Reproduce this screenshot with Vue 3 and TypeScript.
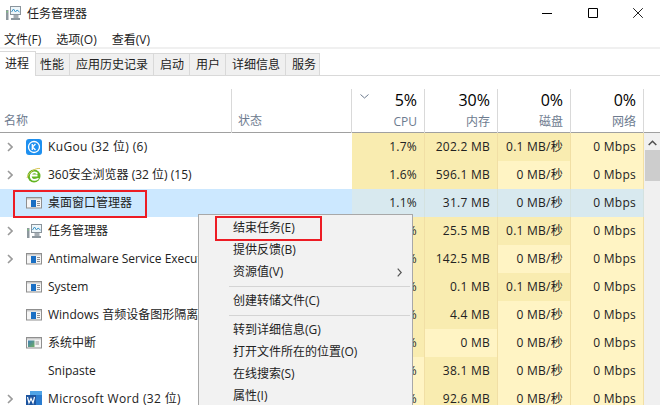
<script setup lang="ts">
interface Row {
  name: string
  icon: string
  arrow: boolean
  cpu: string
  mem: string
  disk: string
  net: string
  selected?: boolean
  cpuLight?: boolean
  memLight?: boolean
  diskDark?: boolean
  wide?: boolean
}

const menuBar = ['文件(F)', '选项(O)', '查看(V)']
const tabs = [
  { t: '性能', narrow: true },
  { t: '应用历史记录' },
  { t: '启动' },
  { t: '用户' },
  { t: '详细信息' },
  { t: '服务', tight: true },
]
const usage = [
  { pct: '5%', label: 'CPU' },
  { pct: '30%', label: '内存' },
  { pct: '0%', label: '磁盘' },
  { pct: '0%', label: '网络' },
]
const rows: Row[] = [
  { name: 'KuGou (32 位) (6)', icon: 'kugou', arrow: true, cpu: '1.7%', mem: '202.2 MB', disk: '0.1 MB/秒', net: '0 Mbps', diskDark: true, wide: true },
  { name: '360安全浏览器 (32 位) (15)', icon: 'e360', arrow: true, cpu: '1.6%', mem: '596.1 MB', disk: '0 MB/秒', net: '0 Mbps' },
  { name: '桌面窗口管理器', icon: 'win', arrow: false, cpu: '1.1%', mem: '31.7 MB', disk: '0 MB/秒', net: '0 Mbps', selected: true },
  { name: '任务管理器', icon: 'tm', arrow: true, cpu: '0.8%', mem: '25.5 MB', disk: '0.1 MB/秒', net: '0 Mbps', diskDark: true },
  { name: 'Antimalware Service Executable', icon: 'win', arrow: true, cpu: '0.3%', mem: '142.5 MB', disk: '0 MB/秒', net: '0 Mbps' },
  { name: 'System', icon: 'win', arrow: false, cpu: '0.1%', mem: '0.1 MB', disk: '0.1 MB/秒', net: '0 Mbps', diskDark: true },
  { name: 'Windows 音频设备图形隔离', icon: 'win', arrow: false, cpu: '0.1%', mem: '4.4 MB', disk: '0 MB/秒', net: '0 Mbps' },
  { name: '系统中断', icon: 'int', arrow: false, cpu: '0.1%', mem: '0 MB', disk: '0 MB/秒', net: '0 Mbps', memLight: true },
  { name: 'Snipaste', icon: 'none', arrow: false, cpu: '0%', mem: '38.1 MB', disk: '0 MB/秒', net: '0 Mbps', cpuLight: true },
  { name: 'Microsoft Word (32 位)', icon: 'word', arrow: true, cpu: '0%', mem: '92.6 MB', disk: '0 MB/秒', net: '0 Mbps', cpuLight: true, wide: true },
]
const menuGroups = [
  [{ t: '结束任务(E)' }, { t: '提供反馈(B)' }, { t: '资源值(V)', sub: true }],
  [{ t: '创建转储文件(C)' }],
  [{ t: '转到详细信息(G)' }, { t: '打开文件所在的位置(O)' }, { t: '在线搜索(S)' }, { t: '属性(I)' }],
]
</script>

<template>
  <div class="app">
    <div class="title">
      <svg class="ticon" width="16" height="16" viewBox="0 0 16 16">
        <rect x="5.500" y="1.500" width="10" height="8" fill="#eef6fa" stroke="#8a949c" />
        <path d="M6.500 7l2-3 2 3 1.500-2 2.500 2" fill="none" stroke="#3f97c9" />
        <path d="M8.500 10h5v3h-5z" fill="#a5adb3" />
        <path d="M1 5h2.500v10H1z" fill="#8d979e" />
        <path d="M1.500 6h1.500v1.500h-1.500z" fill="#7fc37f" />
        <path d="M6 13h9v2H6z" fill="#8d979e" />
      </svg>
      <span class="tname">任务管理器</span>
      <div class="winbtns">
        <svg width="10" height="10" viewBox="0 0 10 10"><path d="M0 5.500h10" stroke="#000" fill="none" /></svg>
        <svg width="10" height="10" viewBox="0 0 10 10"><path d="M.5.500h9v9h-9z" stroke="#000" fill="none" /></svg>
        <svg width="10" height="10" viewBox="0 0 10 10"><path d="M.2.200l9.600 9.600M9.800.200L.2 9.800" stroke="#222" fill="none" /></svg>
      </div>
    </div>
    <div class="menubar">
      <span v-for="m in menuBar" :key="m">{{ m }}</span>
    </div>
    <div class="tabs">
      <div class="tab active">进程</div>
      <div v-for="t in tabs" :key="t.t" class="tab" :class="{ narrow: t.narrow, tight: t.tight }">{{ t.t }}</div>
    </div>
    <div class="head">
      <div class="hname">名称</div>
      <div class="hstatus">状态</div>
      <div v-for="(u, i) in usage" :key="u.label" class="hnum">
        <svg v-if="i === 0" class="sort" width="9" height="5" viewBox="0 0 9 5"><path d="M.5.500l4 3.500 4-3.500" fill="none" stroke="#6d7b8f" /></svg>
        <span class="pct">{{ u.pct }}</span>
        <span class="lab">{{ u.label }}</span>
      </div>
    </div>
    <div class="main">
      <div class="table">
        <div v-for="r in rows" :key="r.name" class="row" :class="{ sel: r.selected }">
          <div class="cname">
            <svg class="chev" :class="{ hide: !r.arrow }" width="6" height="10" viewBox="0 0 6 10"><path d="M1 1l4 4-4 4" fill="none" stroke="#9a9a9a" stroke-width="1.600" /></svg>
            <svg class="ico" width="16" height="16" viewBox="0 0 16 16">
              <template v-if="r.icon === 'kugou'">
                <rect width="16" height="16" rx="3" fill="#1e90f0" />
                <circle cx="8" cy="8" r="5.500" fill="none" stroke="#fff" stroke-width="1.300" />
                <path d="M6.300 5v6M6.500 8l3-3M6.500 8l3 3" fill="none" stroke="#fff" stroke-width="1.300" />
              </template>
              <template v-else-if="r.icon === 'e360'">
                <circle cx="8" cy="9" r="6.500" fill="#62b521" />
                <path d="M4.500 8.500h7M11.300 6.800C10 4.800 6 4.800 5 7.800s1 5.500 4 5 2.800-1.600 2.800-1.600" fill="none" stroke="#fff" stroke-width="1.900" />
                <path d="M1 11C3 5 9 .8 14 1.500" fill="none" stroke="#d9c65a" />
              </template>
              <template v-else-if="r.icon === 'win'">
                <rect x=".5" y="2.500" width="15" height="10.500" fill="#f6f6f6" stroke="#8f8f8f" />
                <rect x="1" y="3" width="14" height="1.500" fill="#c9c9c9" />
                <rect x="5" y="5" width="5" height="7" fill="#1a6fc4" />
                <path d="M11 6.500H14M11 8.500H14M11 10.500H14" stroke="#8f8f8f" />
              </template>
              <template v-else-if="r.icon === 'int'">
                <defs>
                  <linearGradient id="intg" x1="0" y1="0" x2="1" y2="1">
                    <stop offset="0" stop-color="#3f7fb8" />
                    <stop offset="1" stop-color="#6fae5f" />
                  </linearGradient>
                </defs>
                <rect x=".5" y="2.500" width="15" height="10.500" fill="#f6f6f6" stroke="#8f8f8f" />
                <rect x="1" y="3" width="14" height="1.500" fill="#c9c9c9" />
                <rect x="2" y="5.500" width="6.500" height="6.500" fill="url(#intg)" />
                <path d="M9.500 7H13M9.500 9H13" stroke="#8f8f8f" />
              </template>
              <template v-else-if="r.icon === 'tm'">
                <rect x="5.500" y="1.500" width="10" height="8" fill="#eef6fa" stroke="#8a949c" />
                <path d="M6.500 7l2-3 2 3 1.500-2 2.500 2" fill="none" stroke="#3f97c9" />
                <path d="M8.500 10h5v3h-5z" fill="#a5adb3" />
                <path d="M1 5h2.500v10H1z" fill="#8d979e" />
                <path d="M1.500 6h1.500v1.500h-1.500z" fill="#7fc37f" />
                <path d="M6 13h9v2H6z" fill="#8d979e" />
              </template>
              <template v-else-if="r.icon === 'word'">
                <rect x="4" y="0" width="12" height="16" fill="#2a7cd0" />
                <rect x="4" y="0" width="12" height="4" fill="#4fa3e6" />
                <rect x="0" y="4" width="10" height="10" fill="#1c549f" />
                <path d="M1.500 6l1.500 6 2-4.500 2 4.500 1.500-6" fill="none" stroke="#fff" stroke-width="1.200" />
              </template>
            </svg>
            <span class="ntext" :class="{ wide: r.wide }">{{ r.name }}</span>
          </div>
          <div class="cstatus"></div>
          <div class="cnum dark" :class="{ light: r.cpuLight }">{{ r.cpu }}</div>
          <div class="cnum dark" :class="{ light: r.memLight }">{{ r.mem }}</div>
          <div class="cnum" :class="{ dark: r.diskDark }">{{ r.disk }}</div>
          <div class="cnum">{{ r.net }}</div>
        </div>
      </div>
      <div class="scroll">
        <svg class="up" width="9" height="6" viewBox="0 0 9 6"><path d="M.7 5l3.800-3.800L8.300 5" fill="none" stroke="#505050" stroke-width="1.500" /></svg>
        <div class="thumb"></div>
      </div>
    </div>

    <div class="mark mark-row"></div>
    <div class="ctx">
      <template v-for="(g, gi) in menuGroups" :key="gi">
        <div v-if="gi > 0" class="sep"></div>
        <div v-for="it in g" :key="it.t" class="item">
          <span>{{ it.t }}</span>
          <svg v-if="it.sub" class="subarrow" width="5" height="9" viewBox="0 0 5 9"><path d="M.7.700l3.500 3.800-3.500 3.800" fill="none" stroke="#555" stroke-width="1.200" /></svg>
        </div>
      </template>
    </div>
    <div class="mark mark-menu"></div>
  </div>
</template>

<style>
html, body { margin: 0; background: #fff; overflow: hidden; }
</style>

<style scoped>
.app {
  position: relative;
  width: 660px;
  height: 405px;
  overflow: hidden;
  background: #fff;
  color: #000;
  font-family: "Open Sans", "Noto Sans CJK SC", sans-serif;
  font-size: 12px;
}
.title { height: 26px; padding-bottom: 4px; display: flex; align-items: center; padding-left: 5px; }
.ticon { margin-right: 6px; }
.tname { color: #222; }
.winbtns { margin-left: auto; display: flex; gap: 35.500px; padding-right: 17px; }
.menubar { height: 17px; display: flex; gap: 15px; padding-left: 4px; align-items: center; color: #222; }
.tabs {
  height: 26px;
  border-top: 2px solid #f0f0f0;
  border-bottom: 1px solid #d9d9d9;
  display: flex;
  align-items: flex-end;
}
.tab {
  height: 21px;
  line-height: 21px;
  padding: 0 5px 0 6px;
  background: #f0f0f0;
  border: 1px solid #d9d9d9;
  border-left: 0;
  border-bottom: 0;
  color: #222;
}
.tab.narrow { padding: 0 5px 0 4px; }
.tab.tight { padding: 0 3px 0 6px; }
.tab.active {
  height: 24px;
  line-height: 23px;
  background: #fff;
  margin-bottom: -1px;
  padding: 0 6px 0 5px;
}
.head {
  display: grid;
  grid-template-columns: 232px 120px 73px 73px 73px 73px 16px;
  height: 43px;
  margin-top: 13px;
  border-bottom: 1px solid #a0a0a0;
}
.hname, .hstatus { color: #6d7b8f; display: flex; align-items: flex-end; padding-bottom: 4px; }
.hname { padding-left: 4px; border-right: 1px solid #d9d9d9; }
.hstatus { padding-left: 6px; border-right: 1px solid #d9d9d9; }
.hnum {
  position: relative;
  display: flex;
  flex-direction: column;
  align-items: flex-end;
  justify-content: flex-end;
  padding: 0 7px 3px 0;
  border-right: 1px solid #d9d9d9;
}
.sort { position: absolute; left: 8px; top: 5px; }
.pct { font-size: 16px; line-height: 22px; color: #000; margin-bottom: 3px; }
.lab { color: #6d7b8f; line-height: 16px; }
.main { display: flex; }
.table { width: 644px; flex: none; }
.row {
  display: grid;
  grid-template-columns: 232px 120px 73px 73px 73px 73px;
  height: 28px;
}
.row.sel { background: #cce8ff; }
.cname { display: flex; align-items: center; min-width: 0; overflow: hidden; white-space: nowrap; }
.chev { margin-left: 7px; flex: none; }
.chev.hide { visibility: hidden; }
.ico { margin-left: 13px; flex: none; }
.ntext { margin-left: 6px; padding-bottom: 2px; color: #222; }
.ntext.wide { letter-spacing: .35px; }
.cnum {
  background: #fff4c4;
  border-right: 1px solid #f1dfa5;
  text-align: right;
  line-height: 27px;
  padding-right: 7px;
  color: #222;
  letter-spacing: .25px;
}
.cnum.dark { background: #f9ecb0; }
.cnum.dark.light { background: #fff4c4; }
.row.sel .cnum, .row.sel .cnum.dark { background: #d8e9ef; border-right-color: #d4e2e0; }
.scroll { position: relative; flex: 1; background: #f0f0f0; height: 272px; }
.up { position: absolute; left: 4px; top: 7px; }
.thumb { position: absolute; left: 1px; right: 0; top: 17px; height: 31px; background: #cdcdcd; }
.ctx {
  position: absolute;
  left: 198px;
  top: 214px;
  width: 215px;
  height: 200px;
  background: #f2f2f2;
  border: 1px solid #a8a8a8;
  box-sizing: border-box;
  padding-top: 2px;
  color: #222;
}
.item { height: 22px; line-height: 22px; padding-left: 34px; position: relative; }
.subarrow { position: absolute; right: 10px; top: 7px; }
.sep { height: 1px; background: #d4d4d4; margin: 3px 2px 3px 30px; }
.mark { position: absolute; border: 2px solid #ed1c24; box-sizing: border-box; }
.mark-row { left: 13px; top: 190px; width: 134px; height: 28px; }
.mark-menu { left: 215px; top: 216px; width: 107px; height: 25px; }
</style>
